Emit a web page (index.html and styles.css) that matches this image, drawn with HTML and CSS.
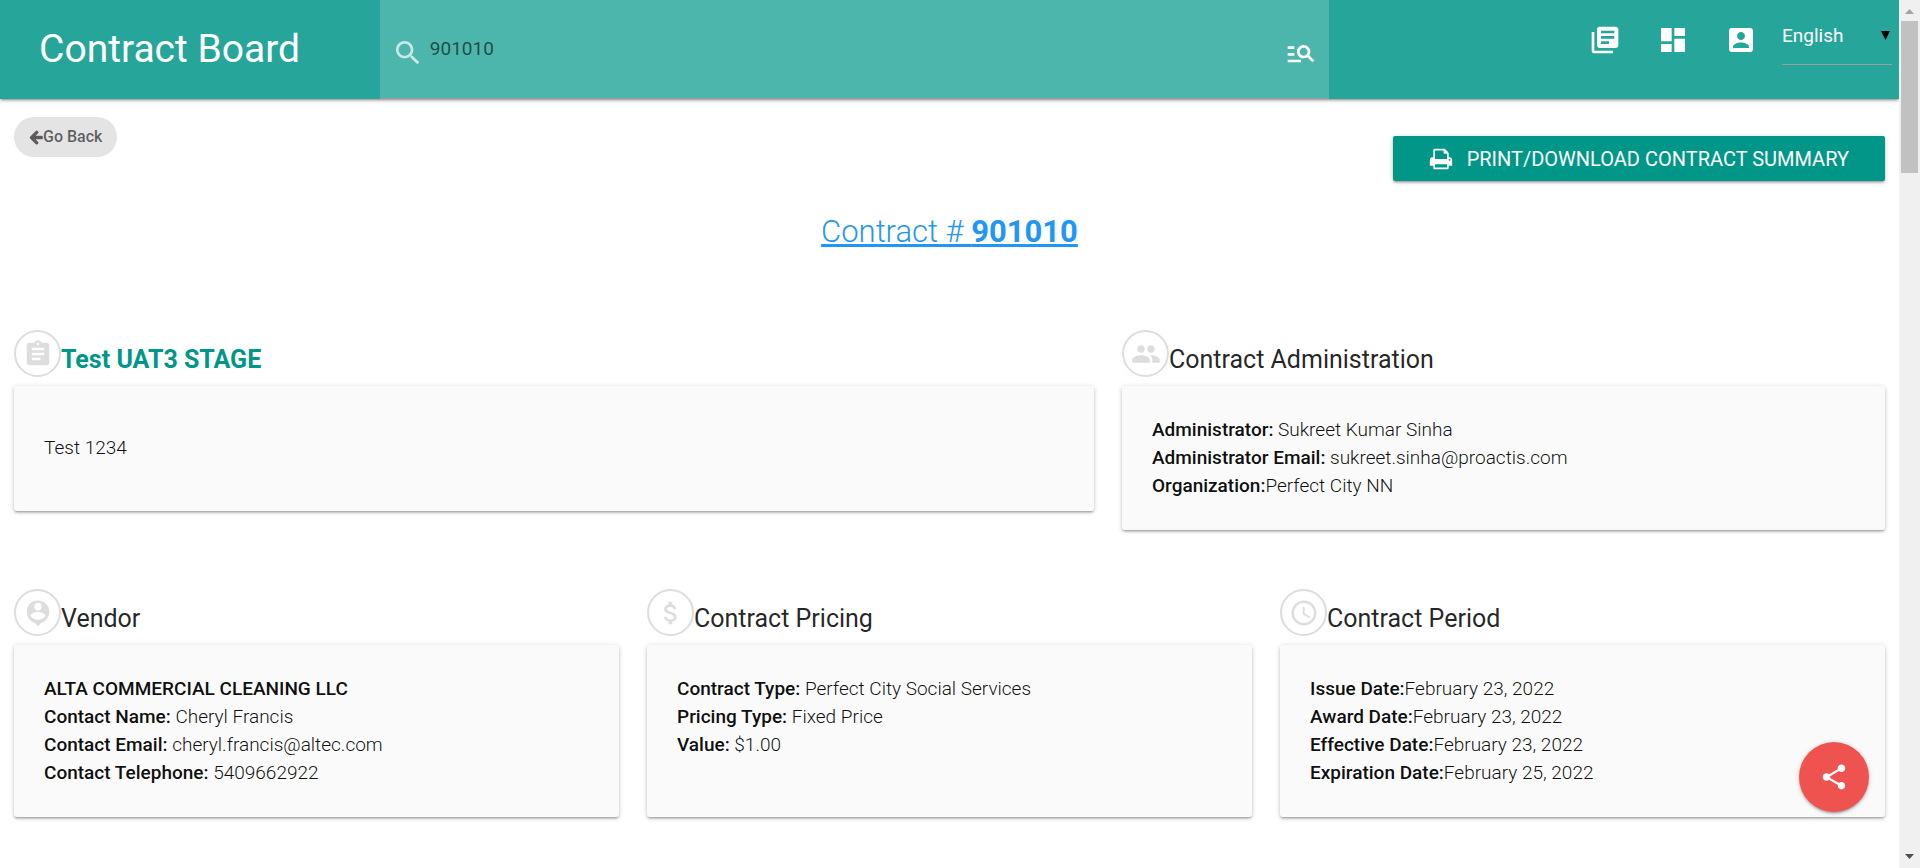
FILE: index.html
```html
<!DOCTYPE html>
<html lang="en">
<head>
<meta charset="utf-8">
<title>Contract Board</title>
<link rel="stylesheet" href="styles.css">
</head>
<body>
<div class="app">
  <header class="topbar">
    <h1 class="brand">Contract Board</h1>
    <form class="search" role="search">
      <label class="search-label" for="q"><svg class="icon icon-search" viewBox="0 0 24 24" role="img" aria-label="Search"><path d="M15.5 14h-.79l-.28-.27C15.41 12.59 16 11.11 16 9.500 16 5.910 13.090 3 9.500 3S3 5.910 3 9.500 5.910 16 9.500 16c1.610 0 3.090-.59 4.230-1.570l.27.28v.79l5 4.990L20.490 19l-4.990-5zm-6 0C7.010 14 5 11.990 5 9.500S7.010 5 9.500 5 14 7.010 14 9.500 11.990 14 9.500 14z"/></svg></label>
      <input class="search-input" id="q" type="text" value="901010">
      <button class="icon-button" type="button" aria-label="Advanced search"><svg class="icon" viewBox="0 0 24 24"><path d="M7 9H2V7h5v2zm0 3H2v2h5v-2zm13.590 7l-3.830-3.830c-.8.52-1.740.83-2.760.83-2.760 0-5-2.240-5-5s2.240-5 5-5 5 2.240 5 5c0 1.020-.31 1.960-.83 2.750L22 17.590 20.590 19zM17 11c0-1.650-1.350-3-3-3s-3 1.350-3 3 1.350 3 3 3 3-1.350 3-3zM2 19h10v-2H2v2z"/></svg></button>
    </form>
    <nav class="menu">
      <a class="menu-link" href="#" aria-label="Library"><svg class="icon" viewBox="0 0 24 24"><path d="M4 6H2v14c0 1.100.9 2 2 2h14v-2H4V6zm16-4H8c-1.100 0-2 .9-2 2v12c0 1.100.9 2 2 2h12c1.100 0 2-.9 2-2V4c0-1.100-.9-2-2-2zm-1 9H9V9h10v2zm-4 4H9v-2h6v2zm4-8H9V5h10v2z"/></svg></a>
      <a class="menu-link" href="#" aria-label="Dashboard"><svg class="icon" viewBox="0 0 24 24"><path d="M3 13h8V3H3v10zm0 8h8v-6H3v6zm10 0h8V11h-8v10zm0-18v6h8V3h-8z"/></svg></a>
      <a class="menu-link" href="#" aria-label="Account"><svg class="icon" viewBox="0 0 24 24"><path d="M3 5v14c0 1.100.89 2 2 2h14c1.100 0 2-.9 2-2V5c0-1.100-.9-2-2-2H5c-1.110 0-2 .9-2 2zm12 4c0 1.660-1.340 3-3 3s-3-1.340-3-3 1.340-3 3-3 3 1.340 3 3zm-9 8c0-2 4-3.100 6-3.100s6 1.100 6 3.100v1H6v-1z"/></svg></a>
      <div class="language">
        <select class="language-select" aria-label="Language"><option>English</option></select>
        <svg class="language-arrow" viewBox="0 0 10 10" aria-hidden="true"><path d="M0 0h10L5 10z"/></svg>
      </div>
    </nav>
  </header>

  <main class="content">
    <div class="toolbar">
      <button class="chip" type="button"><svg class="chip-icon" viewBox="128 0 1536 1792"><path d="M1664 896v128q0 53-32.500 90.500t-84.500 37.500h-704l293 294q38 36 38 90t-38 90l-75 76q-37 37-90 37-52 0-91-37l-651-652q-37-37-37-90 0-52 37-91l651-650q38-38 91-38 52 0 90 38l75 74q38 38 38 91t-38 91l-293 293h704q52 0 84.500 37.500t32.500 90.500z"/></svg>Go Back</button>
      <button class="print" type="button"><svg class="print-icon" viewBox="0 0 1792 1792"><path d="M448 1536h896v-256h-896v256zm0-640h896v-384h-160q-40 0-68-28t-28-68v-160h-640v640zm1152 64q0-26-19-45t-45-19-45 19-19 45 19 45 45 19 45-19 19-45zm128 0v416q0 13-9.500 22.500t-22.500 9.500h-224v160q0 40-28 68t-68 28h-960q-40 0-68-28t-28-68v-160h-224q-13 0-22.500-9.500t-9.500-22.500v-416q0-79 56.500-135.500t135.500-56.500h64v-544q0-40 28-68t68-28h672q40 0 88 20t76 48l152 152q28 28 48 76t20 88v256h64q79 0 135.500 56.500t56.500 135.500z"/></svg>PRINT/DOWNLOAD CONTRACT SUMMARY</button>
    </div>
    <h2 class="contract"><a class="contract-link" href="#">Contract # <b class="contract-number">901010</b></a></h2>

    <div class="row row-split">
      <section>
        <h3 class="heading heading-accent"><span class="badge"><svg class="badge-icon" viewBox="0 0 24 24"><path d="M19 3h-4.180C14.400 1.840 13.300 1 12 1c-1.300 0-2.400.84-2.820 2H5c-1.100 0-2 .9-2 2v14c0 1.100.9 2 2 2h14c1.100 0 2-.9 2-2V5c0-1.100-.9-2-2-2zm-7 0c.55 0 1 .45 1 1s-.45 1-1 1-1-.45-1-1 .45-1 1-1zm2 14H7v-2h7v2zm3-4H7v-2h10v2zm0-4H7V7h10v2z"/></svg></span><span class="heading-text">Test UAT3 STAGE</span></h3>
        <div class="card"><p class="summary">Test 1234</p></div>
      </section>
      <section>
        <h3 class="heading"><span class="badge"><svg class="badge-icon" viewBox="0 0 24 24"><path d="M16 11c1.660 0 2.990-1.340 2.990-3S17.660 5 16 5c-1.660 0-3 1.340-3 3s1.340 3 3 3zm-8 0c1.660 0 2.990-1.340 2.990-3S9.660 5 8 5C6.340 5 5 6.340 5 8s1.340 3 3 3zm0 2c-2.330 0-7 1.170-7 3.500V19h14v-2.500c0-2.330-4.670-3.500-7-3.500zm8 0c-.29 0-.62.020-.97.050 1.160.84 1.970 1.970 1.970 3.450V19h6v-2.500c0-2.330-4.670-3.500-7-3.500z"/></svg></span><span class="heading-text">Contract Administration</span></h3>
        <div class="card">
          <div><b>Administrator:</b> Sukreet Kumar Sinha</div>
          <div><b>Administrator Email:</b> sukreet.sinha@proactis.com</div>
          <div><b>Organization:</b>Perfect City NN</div>
        </div>
      </section>
    </div>

    <div class="row row-thirds">
      <section class="panel">
        <h3 class="heading"><span class="badge"><svg class="badge-icon" viewBox="0 0 24 24"><path d="M12 2C6.500 2 3 6 3 11c0 4.500 3 8 6.500 9l2.500 2.500 2.500-2.500c3.500-1 6.500-4.500 6.500-9 0-5-3.500-9-9-9zm0 2c1.660 0 3 1.340 3 3s-1.340 3-3 3-3-1.340-3-3 1.340-3 3-3zm0 13.500c-2.500 0-4.710-1.280-6-3.220.03-1.990 4-3.080 6-3.080 1.990 0 5.970 1.090 6 3.080-1.290 1.940-3.500 3.220-6 3.220z"/></svg></span><span class="heading-text">Vendor</span></h3>
        <div class="card">
          <div><b>ALTA COMMERCIAL CLEANING LLC</b></div>
          <div><b>Contact Name:</b> Cheryl Francis</div>
          <div><b>Contact Email:</b> cheryl.francis@altec.com</div>
          <div><b>Contact Telephone:</b> 5409662922</div>
        </div>
      </section>
      <section class="panel">
        <h3 class="heading"><span class="badge"><svg class="badge-icon" viewBox="0 0 24 24"><path d="M11.800 10.900c-2.270-.59-3-1.200-3-2.150 0-1.090 1.010-1.850 2.700-1.850 1.780 0 2.440.85 2.500 2.100h2.210c-.07-1.720-1.120-3.300-3.210-3.810V3h-3v2.160c-1.940.42-3.500 1.680-3.500 3.610 0 2.310 1.910 3.460 4.700 4.130 2.500.6 3 1.480 3 2.410 0 .69-.49 1.790-2.700 1.790-2.060 0-2.870-.92-2.980-2.100h-2.200c.12 2.190 1.760 3.420 3.680 3.830V21h3v-2.150c1.950-.37 3.500-1.500 3.500-3.550 0-2.840-2.430-3.810-4.700-4.400z"/></svg></span><span class="heading-text">Contract Pricing</span></h3>
        <div class="card">
          <div><b>Contract Type:</b> Perfect City Social Services</div>
          <div><b>Pricing Type:</b> Fixed Price</div>
          <div><b>Value:</b> $1.00</div>
        </div>
      </section>
      <section class="panel">
        <h3 class="heading"><span class="badge"><svg class="badge-icon" viewBox="0 0 24 24"><path d="M11.990 2C6.470 2 2 6.480 2 12s4.470 10 9.990 10C17.520 22 22 17.520 22 12S17.520 2 11.990 2zM12 20c-4.420 0-8-3.580-8-8s3.580-8 8-8 8 3.580 8 8-3.580 8-8 8zm.5-13H11v6l5.250 3.150.75-1.230-4.500-2.670z"/></svg></span><span class="heading-text">Contract Period</span></h3>
        <div class="card">
          <div><b>Issue Date:</b>February 23, 2022</div>
          <div><b>Award Date:</b>February 23, 2022</div>
          <div><b>Effective Date:</b>February 23, 2022</div>
          <div><b>Expiration Date:</b>February 25, 2022</div>
        </div>
      </section>
    </div>
  </main>
</div>

<div class="scrollbar" aria-hidden="true">
  <svg class="scroll-arrow" viewBox="0 0 9 5"><path fill="#a3a3a3" d="M0 5h9L4.500 0z"/></svg>
  <div class="scroll-thumb"></div>
  <svg class="scroll-arrow scroll-down" viewBox="0 0 9 5"><path fill="#505050" d="M0 0h9L4.500 5z"/></svg>
</div>

<button class="share" type="button" aria-label="Share"><svg class="share-icon" viewBox="0 0 24 24"><path d="M18 16.080c-.76 0-1.440.3-1.960.77L8.910 12.700c.05-.23.09-.46.09-.7s-.04-.47-.09-.7l7.050-4.110c.54.5 1.250.81 2.040.81 1.660 0 3-1.340 3-3s-1.340-3-3-3-3 1.340-3 3c0 .24.040.47.090.7L8.040 9.810C7.500 9.310 6.790 9 6 9c-1.660 0-3 1.340-3 3s1.340 3 3 3c.79 0 1.500-.31 2.040-.81l7.120 4.160c-.05.21-.08.43-.08.65 0 1.610 1.310 2.920 2.920 2.920s2.920-1.310 2.920-2.920-1.310-2.920-2.920-2.920z"/></svg></button>
</body>
</html>
```

FILE: styles.css
```css
* { box-sizing: border-box; }

body {
  margin: 0;
  display: flex;
  min-height: 100vh;
  background: #fff;
  color: rgba(0, 0, 0, 0.87);
  font-family: Roboto, "Liberation Sans", sans-serif;
  font-size: 19px;
  line-height: 28px;
  font-weight: 400;
}

h1, h2, h3, p { margin: 0; font-weight: 400; }
b { font-weight: 500; }
button, input, select { font: inherit; }
button { border: 0; padding: 0; cursor: pointer; }
svg { display: block; fill: currentColor; }

.app { flex: 1; min-width: 0; box-shadow: 0 2px 5px rgba(0, 0, 0, 0.2); }

/* Header */
.topbar {
  display: flex;
  background: #26a69a;
  color: #fff;
  height: 99px;
  box-shadow: 0 2px 2px 0 rgba(0, 0, 0, 0.14), 0 3px 1px -2px rgba(0, 0, 0, 0.12), 0 1px 5px 0 rgba(0, 0, 0, 0.2);
}
.brand { width: 20%; padding-left: 39px; font-size: 39px; line-height: 98px; white-space: nowrap; }
.search {
  width: 50%;
  display: flex;
  align-items: center;
  padding: 0 12px;
  background: #4db6ac;
  border-bottom: 1px solid #9e9e9e;
}
.icon { width: 32px; height: 32px; }
.icon-search { opacity: 0.7; }
.search-label, .icon-button { padding-top: 8px; }
.search-input {
  flex: 1;
  min-width: 0;
  border: 0;
  outline: 0;
  padding: 0 6px;
  background: none;
  color: rgba(0, 0, 0, 0.6);
}
.icon-button { background: none; color: #fff; }
.menu { flex: 1; display: flex; justify-content: flex-end; align-items: flex-start; padding-right: 7px; }
.menu-link { padding: 24px 18px; color: #fff; }
.language { position: relative; width: 110px; margin-left: 7px; padding-top: 7px; }
.language-select {
  width: 100%;
  height: 58px;
  padding: 0;
  border: 0;
  border-bottom: 1px solid #9e9e9e;
  background: none;
  color: #fff;
  appearance: none;
  outline: 0;
}
.language-arrow { position: absolute; right: 2px; top: 31px; width: 9px; height: 9px; color: #000; pointer-events: none; }

/* Page body */
.content { padding: 18px 14px 0; }
.toolbar { display: flex; justify-content: space-between; align-items: flex-start; }
.chip {
  display: flex;
  align-items: center;
  height: 40px;
  padding: 0 15px;
  border-radius: 20px;
  background: #e4e4e4;
  color: rgba(0, 0, 0, 0.6);
  font-size: 16px;
  font-weight: 500;
}
.chip-icon { width: 14px; height: 16px; }
.print {
  display: flex;
  align-items: center;
  gap: 14px;
  height: 45px;
  margin-top: 19px;
  padding: 0 36px;
  border-radius: 2px;
  background: #009688;
  color: #fff;
  font-size: 20px;
  box-shadow: 0 2px 2px 0 rgba(0, 0, 0, 0.14), 0 3px 1px -2px rgba(0, 0, 0, 0.12), 0 1px 5px 0 rgba(0, 0, 0, 0.2);
}
.print-icon { width: 24px; height: 24px; }
.contract { margin-top: 31px; text-align: center; font-size: 31px; line-height: 40px; font-weight: 300; }
.contract-link { color: #2196f3; text-decoration-thickness: 3px; }
.contract-number { font-weight: 700; }

.row { display: grid; gap: 28px; }
.row-split { grid-template-columns: 1080fr 763fr; margin-top: 78px; }
.row-thirds { grid-template-columns: repeat(3, 1fr); margin-top: 59px; }
.panel { display: flex; flex-direction: column; }
.panel .card { flex: 1; }

.heading { display: flex; height: 56px; font-size: 25px; line-height: 30px; }
.heading-accent { color: #009688; font-weight: 700; }
.heading-text { padding-top: 15px; }
.badge {
  display: flex;
  align-items: center;
  justify-content: center;
  width: 47px;
  height: 47px;
  border: 2px solid #ddd;
  border-radius: 50%;
  color: #ddd;
}
.badge-icon { width: 30px; height: 30px; }
.card {
  padding: 30px;
  border-radius: 3px;
  background: #fafafa;
  color: rgba(0, 0, 0, 0.95);
  font-weight: 300;
  box-shadow: 0 2px 2px 0 rgba(0, 0, 0, 0.14), 0 3px 1px -2px rgba(0, 0, 0, 0.12), 0 1px 5px 0 rgba(0, 0, 0, 0.2);
}
.summary { padding: 18px 0 19px; font-weight: 300; }

/* Floating share button */
.share {
  position: fixed;
  right: 51px;
  bottom: 56px;
  display: flex;
  align-items: center;
  justify-content: center;
  width: 70px;
  height: 70px;
  border-radius: 50%;
  background: #ef5350;
  color: #fff;
  box-shadow: 0 2px 2px 0 rgba(0, 0, 0, 0.14), 0 3px 1px -2px rgba(0, 0, 0, 0.12), 0 1px 5px 0 rgba(0, 0, 0, 0.2);
}
.share-icon { width: 30px; height: 30px; }

/* Scroll track */
.scrollbar {
  position: sticky;
  top: 0;
  display: flex;
  flex-direction: column;
  align-items: center;
  width: 21px;
  height: 100vh;
  padding: 9px 0;
  background: #f0f0f0;
}
.scroll-arrow { width: 9px; height: 5px; }
.scroll-thumb { width: 17px; height: 152px; margin-top: 7px; background: #c1c1c1; }
.scroll-down { margin-top: auto; }
```
